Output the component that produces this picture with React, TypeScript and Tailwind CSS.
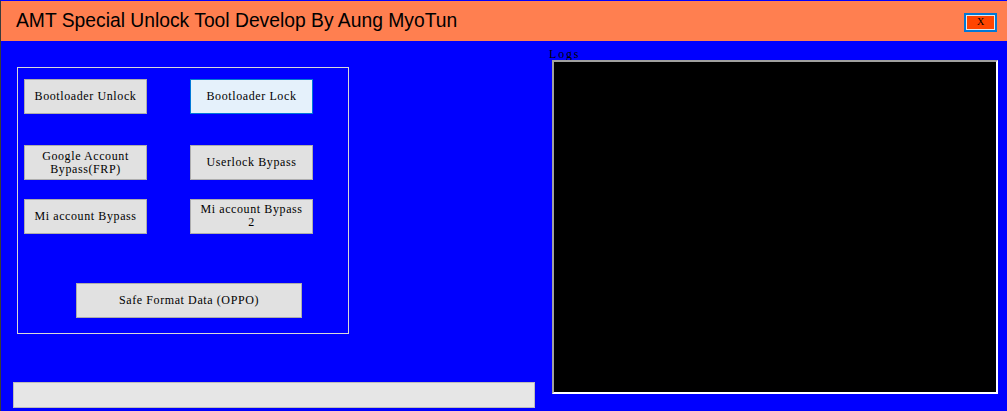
import React from "react";

const btnFont = "font-['Liberation_Serif','DejaVu_Serif',serif]";

function WinButton({
  label,
  className = "",
  focused = false,
}: {
  label: React.ReactNode;
  className?: string;
  focused?: boolean;
}) {
  return (
    <button
      className={`flex h-[35px] items-center justify-center border text-center text-[12px] leading-[13px] tracking-[0.6px] text-black ${btnFont} ${
        focused ? "border-[#0078d7] bg-[#e5f1fb]" : "border-[#adadad] bg-[#e1e1e1]"
      } ${className}`}
    >
      {label}
    </button>
  );
}

export default function App() {
  return (
    <div className="flex h-[411px] w-[1007px] flex-col overflow-hidden border-l border-l-[#3a3a3a] border-t border-t-[#0000ff] bg-[#0000ff]">
      {/* title bar */}
      <div className="flex h-[40px] shrink-0 items-center justify-between bg-[#ff7f50] pl-[15px] pr-[10px]">
        <h1 className="font-['Liberation_Sans',Arial,sans-serif] text-[19.3px] text-black">
          AMT Special Unlock Tool Develop By Aung MyoTun
        </h1>
        <button className="mt-[2px] flex h-[19px] w-[33px] items-center justify-center border-2 border-[#0078d7] p-0">
          <span className="flex h-full w-full items-center justify-center border border-[#e8e8e8] bg-[#ff4500] text-[10px] leading-none text-black font-['Liberation_Serif',serif]">
            X
          </span>
        </button>
      </div>

      <div className="flex flex-1">
        {/* left column */}
        <div className="flex w-[548px] flex-col">
          <div className="ml-[16px] mt-[26px] flex h-[267px] w-[332px] flex-col border border-[#d8d8d8] px-[6px] pt-[11px]">
            <div className="grid grid-cols-[123px_123px] gap-x-[43px]">
              <WinButton label="Bootloader Unlock" />
              <WinButton label="Bootloader Lock" focused />
            </div>
            <div className="mt-[31px] grid grid-cols-[123px_123px] gap-x-[43px]">
              <WinButton
                label={
                  <span>
                    Google Account
                    <br />
                    Bypass(FRP)
                  </span>
                }
              />
              <WinButton label="Userlock Bypass" />
            </div>
            <div className="mt-[19px] grid grid-cols-[123px_123px] gap-x-[43px]">
              <WinButton label="Mi account Bypass" />
              <WinButton
                label={
                  <span className="-mt-[2px]">
                    Mi account Bypass
                    <br />2
                  </span>
                }
              />
            </div>
            <WinButton label="Safe Format Data (OPPO)" className="ml-[52px] mt-[49px] w-[226px]" />
          </div>
          <div className="ml-[12px] mt-[48px] h-[26px] w-[522px] border border-[#bcbcbc] bg-[#e6e6e6]" />
        </div>

        {/* logs */}
        <div className="flex flex-col">
          <span className={`h-[19px] pt-[8px] text-[12px] leading-[11px] tracking-[1.8px] text-black ${btnFont}`}>Logs</span>
          <div className="ml-[3px] h-[334px] w-[446px] border-2 border-b-white border-l-[#a0a0a0] border-r-white border-t-[#a0a0a0] bg-black" />
        </div>
      </div>
    </div>
  );
}
